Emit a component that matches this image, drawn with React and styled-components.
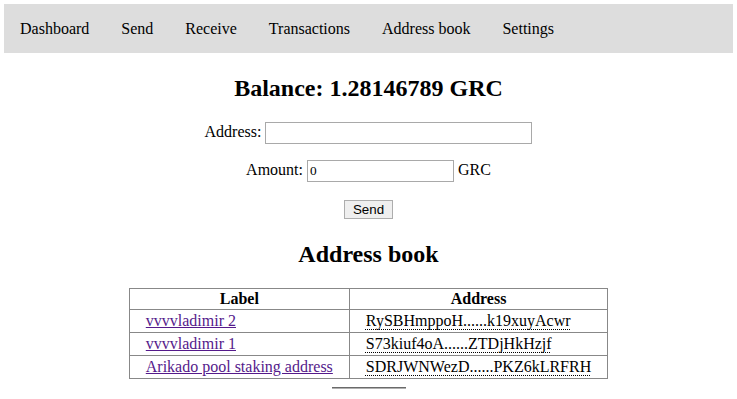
import React from "react";
import styled, { createGlobalStyle } from "styled-components";

const GlobalStyle = createGlobalStyle`
  html, body { background: #fff; }
  body {
    margin: 4px;
    font-family: "Liberation Serif", "Times New Roman", serif;
    font-size: 16px;
    color: #000;
  }
`;

const NavBar = styled.nav`
  display: flex;
  background: #dddddd;
  padding: 16px 0;
  line-height: 17px;
`;

const NavLink = styled.a`
  padding: 0 16px;
  color: #000;
  text-decoration: none;
  cursor: pointer;
`;

const Main = styled.main`
  display: flex;
  flex-direction: column;
  align-items: center;
`;

const Heading = styled.h2`
  font-size: 24px;
  font-weight: bold;
  line-height: 27px;
  margin: ${(p) => p.$top}px 0 ${(p) => p.$bottom}px;
`;

const Form = styled.form`
  display: flex;
  flex-direction: column;
  align-items: center;
  gap: 16px;
`;

const Row = styled.div`
  display: flex;
  align-items: ${(p) => (p.$center ? "center" : "baseline")};
  justify-content: center;
  gap: 4px;
  height: 22px;
  line-height: 18px;
`;

const Label = styled.label`
  font-size: 16px;
`;

const Input = styled.input`
  box-sizing: border-box;
  width: ${(p) => p.$width}px;
  height: 22px;
  padding: 1px 2px;
  border: 1px solid #a9a9a9;
  font-family: "Liberation Serif", serif;
  font-size: 13.33px;
  color: #000;
  background: #fff;
  outline: none;
`;

const Button = styled.button`
  box-sizing: border-box;
  height: 19px;
  padding: 0 8px;
  border: 1px solid #adadad;
  background: #efefef;
  font-family: "Liberation Sans", Arial, sans-serif;
  font-size: 13.33px;
  line-height: 15px;
  color: #000;
`;

const Table = styled.table`
  border-collapse: collapse;
  line-height: 18px;
`;

const Th = styled.th`
  border: 1px solid #888;
  padding: 1px 16px;
  font-weight: bold;
  text-align: center;
`;

const Td = styled.td`
  border: 1px solid #888;
  padding: 2px 16px;
  text-align: left;
`;

const LabelLink = styled.a`
  color: #551a8b;
  text-decoration: underline;
  cursor: pointer;
`;

const Addr = styled.abbr`
  text-decoration: underline dotted;
  text-decoration-thickness: 1px;
  text-underline-offset: 3px;
  text-decoration-skip-ink: none;
`;

const Rule = styled.hr`
  width: 74px;
  height: 0;
  margin: 8px 0 0;
  border: none;
  border-top: 1px solid #6a6a6a;
  border-bottom: 1px solid #b0b0b0;
`;

const navItems = ["Dashboard", "Send", "Receive", "Transactions", "Address book", "Settings"];

const entries = [
  { label: "vvvvladimir 2", short: "RySBHmppoH......k19xuyAcwr", full: "RySBHmppoH...k19xuyAcwr" },
  { label: "vvvvladimir 1", short: "S73kiuf4oA......ZTDjHkHzjf", full: "S73kiuf4oA...ZTDjHkHzjf" },
  { label: "Arikado pool staking address", short: "SDRJWNWezD......PKZ6kLRFRH", full: "SDRJWNWezD...PKZ6kLRFRH" },
];

export default function App() {
  return (
    <>
      <GlobalStyle />
      <NavBar>
        {navItems.map((n) => (
          <NavLink key={n}>{n}</NavLink>
        ))}
      </NavBar>
      <Main>
        <Heading $top={22} $bottom={20}>Balance: 1.28146789 GRC</Heading>
        <Form onSubmit={(e) => e.preventDefault()}>
          <Row>
            <Label>Address:</Label>
            <Input $width={267} type="text" defaultValue="" />
          </Row>
          <Row>
            <Label>Amount:</Label>
            <Input $width={147} type="text" defaultValue="0" />
            <span>GRC</span>
          </Row>
          <Row $center>
            <Button type="submit">Send</Button>
          </Row>
        </Form>
        <Heading $top={21} $bottom={20}>Address book</Heading>
        <Table>
          <thead>
            <tr>
              <Th>Label</Th>
              <Th>Address</Th>
            </tr>
          </thead>
          <tbody>
            {entries.map((e) => (
              <tr key={e.label}>
                <Td>
                  <LabelLink>{e.label}</LabelLink>
                </Td>
                <Td>
                  <Addr title={e.full}>{e.short}</Addr>
                </Td>
              </tr>
            ))}
          </tbody>
        </Table>
        <Rule />
      </Main>
    </>
  );
}
